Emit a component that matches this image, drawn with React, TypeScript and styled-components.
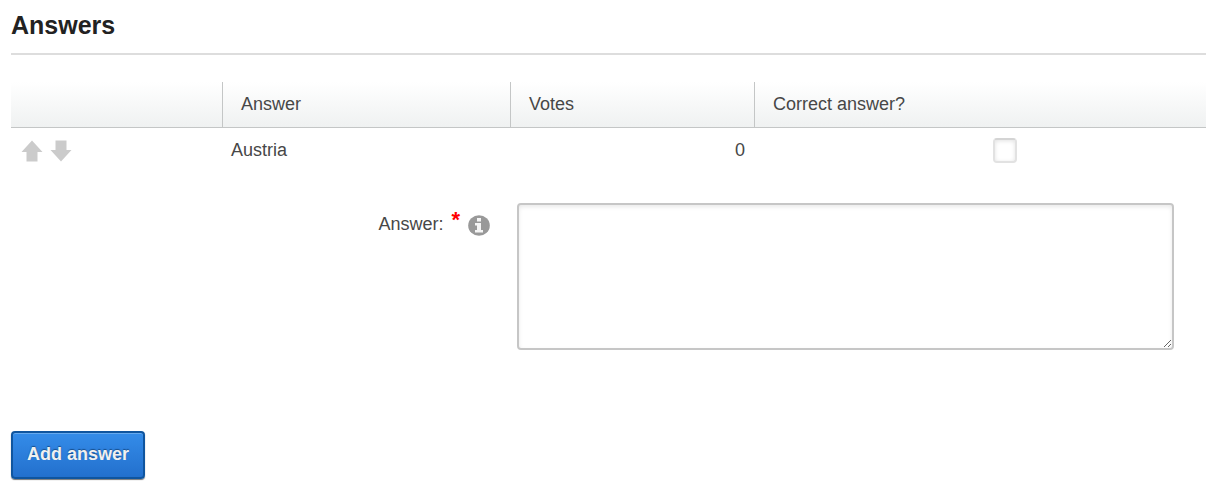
import React, { useState } from "react";
import styled, { createGlobalStyle } from "styled-components";

const GlobalStyle = createGlobalStyle`
  body {
    margin: 0;
    background: #ffffff;
    color: #474747;
    font: 18px/24px "Liberation Sans", Arial, Helvetica, sans-serif;
  }
`;

const Page = styled.main`
  padding: 8px 0 22px 11px;
`;

const Title = styled.h2`
  margin: 0 0 27px;
  padding-bottom: 11px;
  border-bottom: 2px solid #dddddd;
  color: #222222;
  font-size: 25px;
  line-height: 34px;
`;

const Table = styled.table`
  width: 100%;
  table-layout: fixed;
  border-collapse: separate;
  border-spacing: 0;
`;

const Column = styled.col<{ $share?: string }>`
  width: ${({ $share }) => $share ?? "auto"};
`;

const HeaderRow = styled.tr`
  background: linear-gradient(#ffffff, #eff1f1);
`;

const HeaderCell = styled.th`
  box-sizing: border-box;
  height: 46px;
  padding: 0 18px 2px;
  border-bottom: 1px solid #c4c6c6;
  font-weight: normal;
  text-align: left;

  & + & {
    border-left: 1px solid #c4c6c6;
  }
`;

const Cell = styled.td<{ $align?: "left" | "right" | "center" }>`
  height: 44px;
  padding: 0 9px;
  text-align: ${({ $align }) => $align ?? "left"};
`;

const CheckCell = styled(Cell)`
  padding-left: 50px;
  padding-right: 0;
`;

const Actions = styled.div`
  display: flex;
  gap: 7px;
  padding: 2px 0 0 1px;
`;

const IconButton = styled.button`
  display: block;
  padding: 0;
  border: 0;
  background: none;
  color: #cbcbcb;
  line-height: 0;
  cursor: pointer;
`;

const CheckBox = styled.input`
  appearance: none;
  display: block;
  box-sizing: border-box;
  width: 24px;
  height: 25px;
  margin: 0 auto;
  border: 2px solid #e2e2e2;
  border-top-color: #d4d4d4;
  border-radius: 4px;
  background: #ffffff;
  box-shadow: inset 0 1px 4px #e2e2e2;

  &:checked {
    background: #2f84df;
  }
`;

const Field = styled.div`
  display: flex;
  align-items: flex-start;
  gap: 27px;
  margin: 31px 32px 81px 0;
`;

const FieldLabel = styled.div`
  display: flex;
  flex: 0 0 41.2%;
  justify-content: flex-end;
  padding-top: 9px;
  gap: 8px;
`;

const Required = styled.span`
  color: #ff0000;
  font-size: 22px;
  font-weight: bold;
  line-height: 16px;
`;

const InfoButton = styled(IconButton)`
  padding-top: 3px;
  color: #999999;
`;

const TextArea = styled.textarea`
  flex: 1;
  min-width: 0;
  box-sizing: border-box;
  height: 147px;
  padding: 8px;
  border: 2px solid #c6c6c6;
  border-radius: 4px;
  box-shadow: inset 0 2px 4px #e9e9e9;
  color: inherit;
  font: inherit;
  outline: none;
  resize: both;
`;

const PrimaryButton = styled.button`
  display: block;
  height: 48px;
  padding: 0 14px 2px;
  border: 2px solid #0f559f;
  border-radius: 4px;
  background: linear-gradient(#348ce9, #2370cd);
  box-shadow:
    inset 0 1px 0 #65a9ef,
    0 1px 1px #777777;
  color: #f0f0f0;
  font: bold 18px/24px "Liberation Sans", Arial, Helvetica, sans-serif;
  text-shadow: 0 -1px 1px #174e8c;
  cursor: pointer;
`;

const ArrowIcon = ({ down }: { down?: boolean }) => (
  <svg width="22" height="22" viewBox="0 0 22 22" fill="currentColor" aria-hidden="true">
    <path d={down ? "M5.5 0.5h11v9.5h5L11 21.5 0.5 10h5z" : "M5.5 21.5h11V12h5L11 0.5 0.5 12h5z"} />
  </svg>
);

const InfoIcon = () => (
  <svg width="22" height="21" viewBox="0 0 22 21" aria-hidden="true">
    <ellipse cx="11" cy="10.5" rx="10.8" ry="10.2" fill="currentColor" />
    <path d="M9 3h4v3.5H9zM7 8h6v7h2v2.5H7V15h2v-4.5H7z" fill="#f5f5f5" />
  </svg>
);

type Answer = { text: string; votes: number };

export default function App() {
  const [answers, setAnswers] = useState<Answer[]>([{ text: "Austria", votes: 0 }]);
  const [draft, setDraft] = useState("");

  const addAnswer = () => {
    if (!draft.trim()) return;
    setAnswers([...answers, { text: draft.trim(), votes: 0 }]);
    setDraft("");
  };

  return (
    <>
      <GlobalStyle />
      <Page>
        <Title>Answers</Title>
        <Table>
          <colgroup>
            <Column $share="17.66%" />
            <Column $share="24.1%" />
            <Column $share="20.42%" />
            <Column />
          </colgroup>
          <thead>
            <HeaderRow>
              <HeaderCell />
              <HeaderCell scope="col">Answer</HeaderCell>
              <HeaderCell scope="col">Votes</HeaderCell>
              <HeaderCell scope="col">Correct answer?</HeaderCell>
            </HeaderRow>
          </thead>
          <tbody>
            {answers.map((answer, index) => (
              <tr key={index}>
                <Cell>
                  <Actions>
                    <IconButton type="button" aria-label="Move up">
                      <ArrowIcon />
                    </IconButton>
                    <IconButton type="button" aria-label="Move down">
                      <ArrowIcon down />
                    </IconButton>
                  </Actions>
                </Cell>
                <Cell>{answer.text}</Cell>
                <Cell $align="right">{answer.votes}</Cell>
                <CheckCell $align="center">
                  <CheckBox type="checkbox" aria-label={`${answer.text} is correct`} />
                </CheckCell>
              </tr>
            ))}
          </tbody>
        </Table>
        <Field>
          <FieldLabel>
            <label htmlFor="answer">Answer:</label>
            <Required aria-hidden="true">*</Required>
            <InfoButton type="button" aria-label="About this field">
              <InfoIcon />
            </InfoButton>
          </FieldLabel>
          <TextArea id="answer" required value={draft} onChange={(e) => setDraft(e.target.value)} />
        </Field>
        <PrimaryButton type="button" onClick={addAnswer}>
          Add answer
        </PrimaryButton>
      </Page>
    </>
  );
}
